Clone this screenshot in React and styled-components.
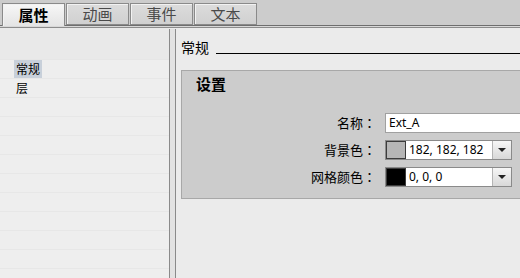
import React from 'react';
import styled, { createGlobalStyle } from 'styled-components';

const Global = createGlobalStyle`
  html, body { margin: 0; padding: 0; background: #ebebeb; }
  body { font-family: "Noto Sans CJK SC", "Noto Sans", sans-serif; }
`;

const Page = styled.div`
  width: 520px;
  height: 278px;
  overflow: hidden;
  display: flex;
  flex-direction: column;
  background: #ebebeb;
`;

const TabStrip = styled.div`
  display: flex;
  align-items: flex-end;
  gap: 1px;
  height: 25px;
  padding-left: 2px;
  background: #cccccc;
  border-bottom: 1px solid #6e6e6e;
  flex-shrink: 0;
`;

const Tab = styled.div`
  position: relative;
  z-index: 1;
  box-sizing: border-box;
  width: 63px;
  height: ${(p) => (p.$active ? '23px' : '22px')};
  margin-bottom: ${(p) => (p.$active ? '-1px' : '0')};
  border: 1px solid #8a8a8a;
  border-bottom: ${(p) => (p.$active ? 'none' : '1px solid #8a8a8a')};
  background: ${(p) =>
    p.$active ? 'linear-gradient(#f7f7f7, #e4e4e4)' : 'linear-gradient(#dcdcdc, #d0d0d0)'};
  box-shadow: inset 1px 1px 0 #f2f2f2;
  display: flex;
  align-items: center;
  justify-content: center;
  font-size: 15px;
  line-height: 20px;
  font-weight: ${(p) => (p.$active ? 700 : 400)};
  color: ${(p) => (p.$active ? '#000' : '#4a4a4a')};
`;

const StripRule = styled.div`
  height: 1px;
  background: #d8d8d8;
  border-bottom: 1px solid #8c8c8c;
  flex-shrink: 0;
`;

const Body = styled.div`
  flex: 1;
  min-height: 0;
  display: flex;
`;

const LeftPanel = styled.div`
  width: 169px;
  flex-shrink: 0;
  display: flex;
  flex-direction: column;
  background: #ededed;
`;

const LeftTop = styled.div`
  height: 31px;
  flex-shrink: 0;
  background: #e9e9e9;
  border-bottom: 1px solid #e6e6e6;
`;

const NavRow = styled.div`
  height: 18px;
  flex-shrink: 0;
  border-bottom: 1px solid #e7e7e7;
  background: #eeeeee;
  padding-left: 14px;
  display: flex;
  align-items: stretch;
`;

const NavLabel = styled.span`
  padding: 0 2px;
  font-size: 12px;
  line-height: 18px;
  color: #000;
  background: ${(p) => (p.$selected ? '#c8d0da' : 'transparent')};
`;

const Splitter = styled.div`
  width: 5px;
  flex-shrink: 0;
  margin-top: 1px;
  border-left: 1px solid #8a8a8a;
  border-right: 1px solid #8a8a8a;
  background: #e2e2e2;
`;

const RightPanel = styled.div`
  flex: 1;
  min-width: 0;
  padding-left: 5px;
  display: flex;
  flex-direction: column;
`;

const SectionHeader = styled.div`
  display: flex;
  align-items: flex-end;
  gap: 7px;
  height: 18px;
  margin-top: 10px;
`;

const SectionTitle = styled.span`
  font-size: 14px;
  line-height: 18px;
  color: #000;
  white-space: nowrap;
`;

const SectionLine = styled.div`
  flex: 1;
  border-bottom: 1px solid #000;
  margin-bottom: 2px;
`;

const GroupBox = styled.div`
  box-sizing: border-box;
  width: 360px;
  height: 129px;
  margin-top: 14px;
  flex-shrink: 0;
  border: 1px solid #a8a8a8;
  background: #cccccc;
`;

const GroupTitle = styled.div`
  margin: 4px 0 0 14px;
  font-size: 15px;
  line-height: 18px;
  font-weight: 700;
  color: #000;
`;

const Form = styled.div`
  display: grid;
  grid-template-columns: 194px 1fr;
  grid-auto-rows: 20px;
  column-gap: 9px;
  row-gap: 7px;
  margin-top: 20px;
`;

const Label = styled.div`
  text-align: right;
  font-size: 13px;
  line-height: 20px;
  color: #000;
  white-space: nowrap;
`;

const Colon = styled.span`
  font-family: "Noto Sans CJK TC", "Noto Sans CJK SC", sans-serif;
`;

const TextInput = styled.div`
  box-sizing: border-box;
  height: 20px;
  border: 1px solid #a0a0a0;
  background: #fff;
  padding-left: 3px;
  font-family: "Noto Sans", sans-serif;
  font-size: 12px;
  line-height: 18px;
  color: #000;
`;

const Combo = styled.div`
  box-sizing: border-box;
  width: 127px;
  height: 20px;
  display: flex;
  border: 1px solid #8a8a8a;
  background: #fff;
`;

const Swatch = styled.div`
  box-sizing: border-box;
  width: 20px;
  flex-shrink: 0;
  border: 1px solid #3c3c3c;
  background: ${(p) => p.$color};
`;

const ComboText = styled.div`
  flex: 1;
  padding-left: 3px;
  font-family: "Noto Sans", sans-serif;
  font-size: 12px;
  line-height: 18px;
  color: #000;
  white-space: nowrap;
  overflow: hidden;
`;

const DropButton = styled.div`
  width: 18px;
  flex-shrink: 0;
  border-left: 1px solid #b4b4b4;
  background: linear-gradient(#f6f6f6, #d8d8d8);
  display: flex;
  align-items: center;
  justify-content: center;
`;

const Arrow = styled.span`
  width: 0;
  height: 0;
  border-left: 4px solid transparent;
  border-right: 4px solid transparent;
  border-top: 4px solid #222;
`;

const tabs = ['属性', '动画', '事件', '文本'];
const navItems = ['常规', '层', '', '', '', '', '', '', '', '', '', '', ''];

function ColorField({ color, value }) {
  return (
    <Combo>
      <Swatch $color={color} />
      <ComboText>{value}</ComboText>
      <DropButton>
        <Arrow />
      </DropButton>
    </Combo>
  );
}

export default function App() {
  return (
    <Page>
      <Global />
      <TabStrip>
        {tabs.map((t, i) => (
          <Tab key={t} $active={i === 0}>
            {t}
          </Tab>
        ))}
      </TabStrip>
      <StripRule />
      <Body>
        <LeftPanel>
          <LeftTop />
          {navItems.map((n, i) => (
            <NavRow key={i}>
              {n && <NavLabel $selected={i === 0}>{n}</NavLabel>}
            </NavRow>
          ))}
        </LeftPanel>
        <Splitter />
        <RightPanel>
          <SectionHeader>
            <SectionTitle>常规</SectionTitle>
            <SectionLine />
          </SectionHeader>
          <GroupBox>
            <GroupTitle>设置</GroupTitle>
            <Form>
              <Label>
                名称<Colon>：</Colon>
              </Label>
              <TextInput>Ext_A</TextInput>
              <Label>
                背景色<Colon>：</Colon>
              </Label>
              <ColorField color="#b6b6b6" value="182, 182, 182" />
              <Label>
                网格颜色<Colon>：</Colon>
              </Label>
              <ColorField color="#000000" value="0, 0, 0" />
            </Form>
          </GroupBox>
        </RightPanel>
      </Body>
    </Page>
  );
}
